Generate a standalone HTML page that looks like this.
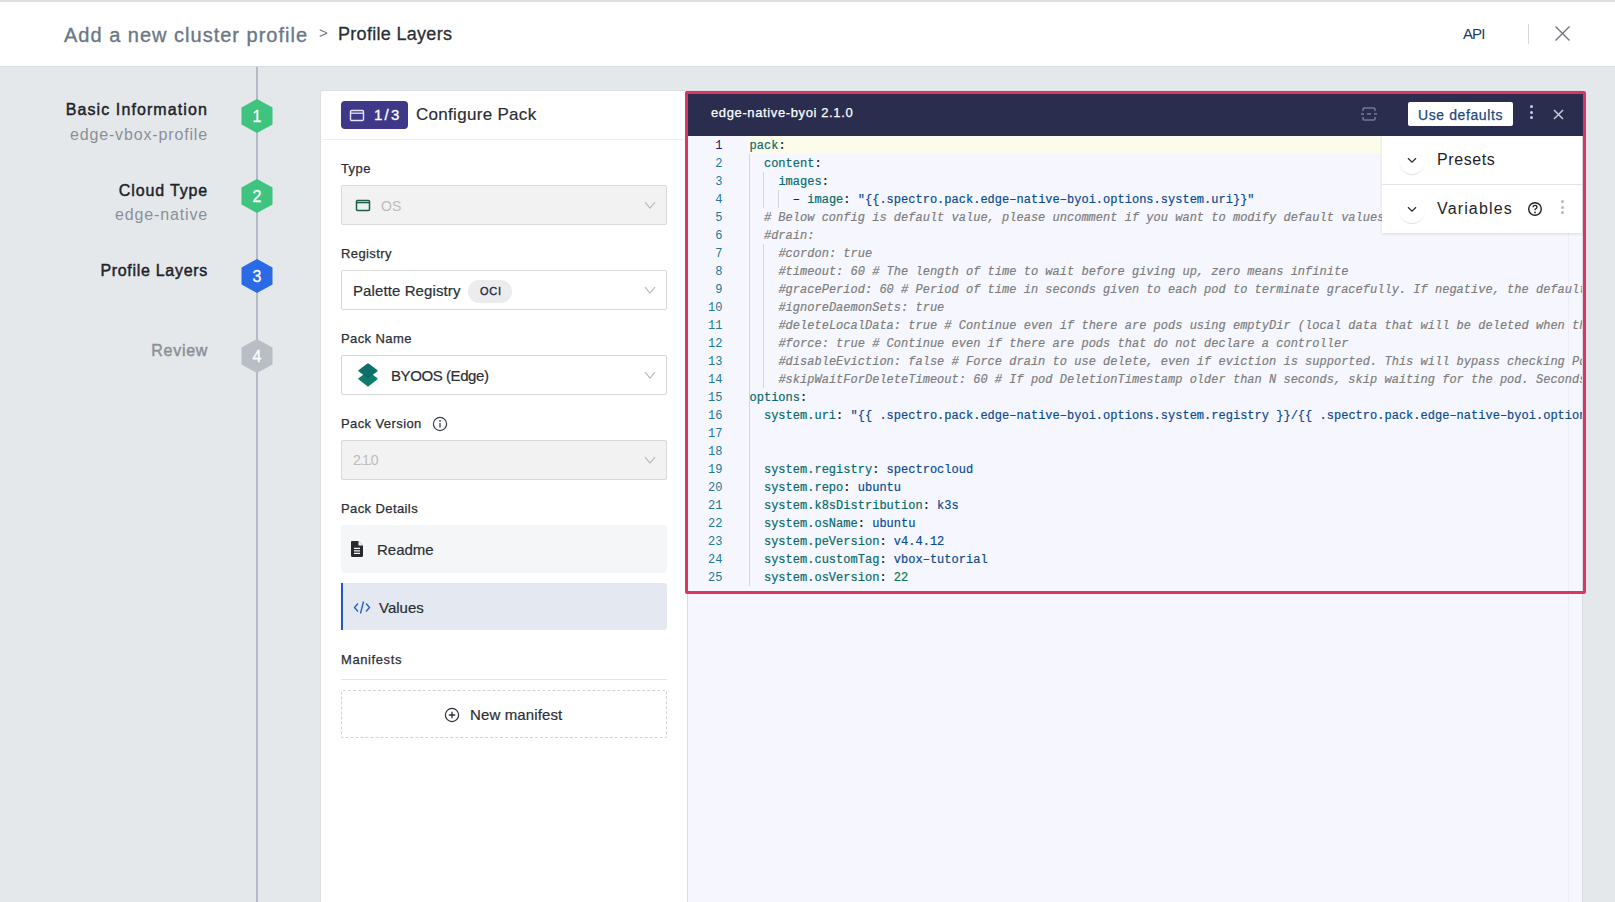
<!DOCTYPE html>
<html><head><meta charset="utf-8">
<style>
*{box-sizing:border-box;margin:0;padding:0}
html,body{width:1615px;height:902px;overflow:hidden}
body{background:#e4e8eb;font-family:"Liberation Sans",sans-serif;position:relative;color:#1f2329}
.abs{position:absolute}
.nw{white-space:nowrap}
#topline{left:0;top:0;width:1615px;height:2px;background:#dfe0e2}
#header{left:0;top:2px;width:1615px;height:65px;background:#fff;border-bottom:1px solid #d8dbe0}
.crumb{position:absolute;white-space:nowrap;line-height:1}
#timeline{left:256px;top:67px;width:2px;height:835px;background:#b6bac8}
.hex{position:absolute;width:32px;height:36px}
.hex span{position:absolute;left:0;top:0;width:32px;height:36px;line-height:36px;text-align:center;color:#fff;font-size:15px}
.step{position:absolute;right:1407px;text-align:right;white-space:nowrap;line-height:1}
.st{font-size:16px;font-weight:normal;color:#1f2329;-webkit-text-stroke:0.45px currentColor}
.ss{font-size:16px;color:#8b9096;letter-spacing:0.6px}
#card{left:320px;top:90px;width:1263px;height:830px;background:#fff;border:1px solid #dcdfe3;border-radius:3px}
.lbl{position:absolute;left:341px;font-size:13px;font-weight:normal;-webkit-text-stroke:0.25px currentColor;color:#2b2f35;letter-spacing:0.4px;line-height:1;white-space:nowrap}
.sel{position:absolute;left:341px;width:326px;height:40px;border:1px solid #d9d9d9;border-radius:2px;background:#fff}
.sel.dis{background:#f2f2f2}
.chev{position:absolute;right:10px;top:15px}
.hexn{width:32px;height:34px;line-height:35px;text-align:center;color:#fff;font-size:16px;-webkit-text-stroke:0.3px #fff}

#lnums{left:690px;top:137px;width:32.5px;font-family:"Liberation Mono",monospace;font-size:12px;line-height:18px;text-align:right;color:#237893}
#lnums .cur{color:#0b216f}
#code{left:749.5px;top:137px;width:832px;height:454px;overflow:hidden;font-family:"Liberation Mono",monospace;font-size:12px;line-height:18px;white-space:pre;letter-spacing:0.014px;-webkit-text-stroke:0.2px currentColor}
.cl{height:18px}
#code b{font-weight:normal}
.ky{color:#086a6b}
.pu{color:#1b1b1b}
.sv{color:#0b4a90}
.nv{color:#0e7b48}
.cm{color:#7d7d7d;font-style:italic}
</style></head><body>
<div id="topline" class="abs"></div>
<div id="header" class="abs">
  <div class="crumb" style="left:64px;top:23px;font-size:20px;color:#6b7785;letter-spacing:1.0px;-webkit-text-stroke:0.35px #6b7785">Add a new cluster profile</div>
  <div class="crumb" style="left:319px;top:23px;font-size:15px;color:#6b7785">&gt;</div>
  <div class="crumb" style="left:338px;top:23px;font-size:18px;color:#2a2f36;letter-spacing:0.3px;-webkit-text-stroke:0.3px #2a2f36">Profile Layers</div>
</div>
<div id="timeline" class="abs"></div>

<div class="abs nw" style="left:1463px;top:26px;font-size:15px;color:#1d3b63;line-height:1;letter-spacing:-0.9px">API</div>
<div class="abs" style="left:1528px;top:24px;width:1px;height:20px;background:#d5d8dc"></div>
<svg class="abs" style="left:1553px;top:24px" width="19" height="19" viewBox="0 0 19 19"><path d="M2.5 2.5L16.5 16.5M16.5 2.5L2.5 16.5" stroke="#6f7580" stroke-width="1.35" fill="none"/></svg>

<svg class="hex" style="left:241px;top:99px" width="32" height="36" viewBox="0 0 32 36"><polygon points="16,0 31.5,8.6 31.5,25.4 16,34 0.5,25.4 0.5,8.6" stroke-linejoin="round" stroke-width="0.8" fill="#3ec47e"/></svg>
<svg class="hex" style="left:241px;top:179px" width="32" height="36" viewBox="0 0 32 36"><polygon points="16,0 31.5,8.6 31.5,25.4 16,34 0.5,25.4 0.5,8.6" stroke-linejoin="round" stroke-width="0.8" fill="#3ec47e"/></svg>
<svg class="hex" style="left:241px;top:259px" width="32" height="36" viewBox="0 0 32 36"><polygon points="16,0 31.5,8.6 31.5,25.4 16,34 0.5,25.4 0.5,8.6" stroke-linejoin="round" stroke-width="0.8" fill="#2a6ae6"/></svg>
<svg class="hex" style="left:241px;top:339px" width="32" height="36" viewBox="0 0 32 36"><polygon points="16,0 31.5,8.6 31.5,25.4 16,34 0.5,25.4 0.5,8.6" stroke-linejoin="round" stroke-width="0.8" fill="#b9bdc4"/></svg>
<div class="abs hexn" style="left:241px;top:99px">1</div>
<div class="abs hexn" style="left:241px;top:179px">2</div>
<div class="abs hexn" style="left:241px;top:259px">3</div>
<div class="abs hexn" style="left:241px;top:339px">4</div>

<div class="step st" style="top:102px;letter-spacing:1.1px">Basic Information</div>
<div class="step ss" style="top:127px;letter-spacing:0.85px">edge-vbox-profile</div>
<div class="step st" style="top:183px;letter-spacing:0.85px">Cloud Type</div>
<div class="step ss" style="top:207px;letter-spacing:0.85px">edge-native</div>
<div class="step st" style="top:263px;letter-spacing:0.7px">Profile Layers</div>
<div class="step st" style="top:343px;color:#8b9096;letter-spacing:0.7px">Review</div>

<div id="card" class="abs"></div>
<div class="abs" style="left:322px;top:139px;width:365px;height:1px;background:#eceef1"></div>
<div class="abs" style="left:341px;top:101px;width:67px;height:28px;background:#3f3889;border-radius:4px"></div>
<svg class="abs" style="left:349px;top:109px" width="16" height="13" viewBox="0 0 16 13"><rect x="1.5" y="1.5" width="13" height="10" rx="1.2" fill="none" stroke="#e6e4f5" stroke-width="1.4"/><path d="M1.5 4.2H14.5" stroke="#e6e4f5" stroke-width="1.3"/></svg>
<div class="abs nw" style="left:374px;top:107px;font-size:15px;font-weight:normal;-webkit-text-stroke:0.35px #fff;color:#fff;line-height:1;letter-spacing:2.2px">1/3</div>
<div class="abs nw" style="left:416px;top:106px;font-size:17px;color:#2b2f35;-webkit-text-stroke:0.2px #2b2f35;line-height:1;letter-spacing:0.3px">Configure Pack</div>

<div class="lbl" style="top:162px">Type</div>
<div class="sel dis" style="top:185px"><svg class="chev" width="12" height="9" viewBox="0 0 12 9"><path d="M1 1.2L6 7.2L11 1.2" stroke="#b8b8b8" stroke-width="1.1" fill="none"/></svg></div>
<svg class="abs" style="left:355px;top:199px" width="16" height="13" viewBox="0 0 16 13"><rect x="1.5" y="1.5" width="13" height="10" rx="1" fill="#e8f3ee" stroke="#1e5b4a" stroke-width="1.5"/><path d="M1.5 3.6H14.5" stroke="#1e5b4a" stroke-width="1.4"/></svg>
<div class="abs nw" style="left:381px;top:199px;font-size:14px;color:#bcbcbc;line-height:1">OS</div>

<div class="lbl" style="top:247px">Registry</div>
<div class="sel" style="top:270px"><svg class="chev" width="12" height="9" viewBox="0 0 12 9"><path d="M1 1.2L6 7.2L11 1.2" stroke="#b8b8b8" stroke-width="1.1" fill="none"/></svg></div>
<div class="abs nw" style="left:353px;top:283px;font-size:15px;color:#2b2f35;-webkit-text-stroke:0.2px #2b2f35;line-height:1;letter-spacing:0.1px">Palette Registry</div>
<div class="abs" style="left:468px;top:280px;width:44px;height:23px;background:#ececee;border-radius:12px"></div>
<div class="abs nw" style="left:480px;top:286px;font-size:11px;font-weight:normal;-webkit-text-stroke:0.35px #222a45;color:#222a45;line-height:1;letter-spacing:0.7px">OCI</div>

<div class="lbl" style="top:332px">Pack Name</div>
<div class="sel" style="top:355px"><svg class="chev" width="12" height="9" viewBox="0 0 12 9"><path d="M1 1.2L6 7.2L11 1.2" stroke="#b8b8b8" stroke-width="1.1" fill="none"/></svg></div>
<svg class="abs" style="left:357px;top:362px" width="22" height="26" viewBox="0 0 22 26"><path d="M11 10.5L19.6 16.7L11 23.4L2.4 16.7Z" fill="#0f7a6c" stroke="#0f7a6c" stroke-width="2" stroke-linejoin="round"/><path d="M11 2.4L19.6 8.7L11 15.3L2.4 8.7Z" fill="#0e6e69" stroke="#0e6e69" stroke-width="2" stroke-linejoin="round"/><path d="M6 11.3L11 15.3L16 11.3L11 14.2Z" fill="#0a5a55"/></svg>
<div class="abs nw" style="left:391px;top:368px;font-size:15px;color:#2b2f35;-webkit-text-stroke:0.2px #2b2f35;line-height:1;letter-spacing:-0.42px">BYOOS (Edge)</div>

<div class="lbl" style="top:417px">Pack Version</div>
<svg class="abs" style="left:432px;top:416px" width="16" height="16" viewBox="0 0 16 16"><circle cx="8" cy="8" r="6.6" fill="none" stroke="#3a3f46" stroke-width="1.2"/><circle cx="8" cy="4.9" r="0.9" fill="#3a3f46"/><path d="M8 7V11.5" stroke="#3a3f46" stroke-width="1.3"/></svg>
<div class="sel dis" style="top:440px"><svg class="chev" width="12" height="9" viewBox="0 0 12 9"><path d="M1 1.2L6 7.2L11 1.2" stroke="#b8b8b8" stroke-width="1.1" fill="none"/></svg></div>
<div class="abs nw" style="left:353px;top:453px;font-size:14px;color:#bcbcbc;line-height:1;letter-spacing:-1.4px">2.1.0</div>

<div class="lbl" style="top:502px">Pack Details</div>
<div class="abs" style="left:341px;top:525px;width:326px;height:48px;background:#f5f6f7;border-radius:3px"></div>
<svg class="abs" style="left:350px;top:540px" width="14" height="18" viewBox="0 0 14 18"><path d="M1 2.2C1 1.5 1.5 1 2.2 1H8.5L13 5.5V15.8C13 16.5 12.5 17 11.8 17H2.2C1.5 17 1 16.5 1 15.8Z" fill="#26292e"/><path d="M8.5 1V5.5H13" fill="#f5f6f8"/><path d="M4 8.4H10M4 10.9H10M4 13.4H10" stroke="#f5f6f8" stroke-width="1.1"/></svg>
<div class="abs nw" style="left:377px;top:542px;font-size:15px;color:#2b2f35;-webkit-text-stroke:0.2px #2b2f35;line-height:1">Readme</div>
<div class="abs" style="left:341px;top:583px;width:326px;height:47px;background:#e4e9f1;border-radius:0 3px 3px 0;border-left:2px solid #2559b8"></div>
<svg class="abs" style="left:353px;top:600px" width="18" height="15" viewBox="0 0 18 15"><path d="M5 3.5L1.5 7.5L5 11.5M13 3.5L16.5 7.5L13 11.5M10.5 1.5L7.5 13.5" stroke="#2a61c4" stroke-width="1.4" fill="none"/></svg>
<div class="abs nw" style="left:379px;top:600px;font-size:15px;color:#2b2f35;-webkit-text-stroke:0.2px #2b2f35;line-height:1">Values</div>

<div class="lbl" style="top:653px;letter-spacing:0.6px">Manifests</div>
<div class="abs" style="left:341px;top:679px;width:326px;height:1px;background:#e3e4e6"></div>
<div class="abs" style="left:341px;top:690px;width:326px;height:48px;border:1px dashed #d3d3d3;border-radius:2px"></div>
<svg class="abs" style="left:444px;top:707px" width="16" height="16" viewBox="0 0 16 16"><circle cx="8" cy="8" r="6.6" fill="none" stroke="#2b2f35" stroke-width="1.2"/><path d="M8 4.8V11.2M4.8 8H11.2" stroke="#2b2f35" stroke-width="1.3"/></svg>
<div class="abs nw" style="left:470px;top:707px;font-size:15px;color:#2b2f35;-webkit-text-stroke:0.2px #2b2f35;line-height:1;letter-spacing:0.12px">New manifest</div>

<div class="abs" style="left:687px;top:91px;width:896px;height:811px;background:#f6f7fe;border-left:1px solid #d9dbe3;border-right:1px solid #d9dbe3"></div>
<div class="abs" style="left:1568px;top:136px;width:1px;height:766px;background:#eceef5"></div>
<div class="abs" style="left:749px;top:136px;width:820px;height:18px;background:#fdfbe9"></div>
<div class="abs" style="left:749px;top:154px;width:1px;height:432px;background:#d5d7de"></div>
<div class="abs" style="left:763px;top:172px;width:1px;height:36px;background:#d5d7de"></div>
<div class="abs" style="left:778px;top:190px;width:1px;height:18px;background:#d5d7de"></div>
<div class="abs" style="left:763px;top:244px;width:1px;height:144px;background:#d5d7de"></div>
<div class="abs" style="left:749px;top:406px;width:1px;height:180px;background:#d5d7de"></div>
<div id="lnums" class="abs"><div class="ln cur">1</div><div class="ln">2</div><div class="ln">3</div><div class="ln">4</div><div class="ln">5</div><div class="ln">6</div><div class="ln">7</div><div class="ln">8</div><div class="ln">9</div><div class="ln">10</div><div class="ln">11</div><div class="ln">12</div><div class="ln">13</div><div class="ln">14</div><div class="ln">15</div><div class="ln">16</div><div class="ln">17</div><div class="ln">18</div><div class="ln">19</div><div class="ln">20</div><div class="ln">21</div><div class="ln">22</div><div class="ln">23</div><div class="ln">24</div><div class="ln">25</div></div>
<div id="code" class="abs"><div class="cl"><b class="ky">pack</b><b class="pu">:</b></div><div class="cl">  <b class="ky">content</b><b class="pu">:</b></div><div class="cl">    <b class="ky">images</b><b class="pu">:</b></div><div class="cl">      <b class="pu">–</b> <b class="ky">image</b><b class="pu">:</b> <b class="sv">&quot;{{.spectro.pack.edge–native–byoi.options.system.uri}}&quot;</b></div><div class="cl">  <i class="cm"># Below config is default value, please uncomment if you want to modify default values</i></div><div class="cl">  <i class="cm">#drain:</i></div><div class="cl">    <i class="cm">#cordon: true</i></div><div class="cl">    <i class="cm">#timeout: 60 # The length of time to wait before giving up, zero means infinite</i></div><div class="cl">    <i class="cm">#gracePeriod: 60 # Period of time in seconds given to each pod to terminate gracefully. If negative, the default value specified in the pod will be used</i></div><div class="cl">    <i class="cm">#ignoreDaemonSets: true</i></div><div class="cl">    <i class="cm">#deleteLocalData: true # Continue even if there are pods using emptyDir (local data that will be deleted when the node is drained)</i></div><div class="cl">    <i class="cm">#force: true # Continue even if there are pods that do not declare a controller</i></div><div class="cl">    <i class="cm">#disableEviction: false # Force drain to use delete, even if eviction is supported. This will bypass checking PodDisruptionBudgets, use with caution.</i></div><div class="cl">    <i class="cm">#skipWaitForDeleteTimeout: 60 # If pod DeletionTimestamp older than N seconds, skip waiting for the pod. Seconds must be greater than 0 to skip.</i></div><div class="cl"><b class="ky">options</b><b class="pu">:</b></div><div class="cl">  <b class="ky">system.uri</b><b class="pu">:</b> <b class="sv">&quot;{{ .spectro.pack.edge–native–byoi.options.system.registry }}/{{ .spectro.pack.edge–native–byoi.options.system.repo }}:{{ .spectro.pack.edge–native–byoi.options.system.k8sDistribution }}&quot;</b></div><div class="cl"></div><div class="cl"></div><div class="cl">  <b class="ky">system.registry</b><b class="pu">:</b> <b class="sv">spectrocloud</b></div><div class="cl">  <b class="ky">system.repo</b><b class="pu">:</b> <b class="sv">ubuntu</b></div><div class="cl">  <b class="ky">system.k8sDistribution</b><b class="pu">:</b> <b class="sv">k3s</b></div><div class="cl">  <b class="ky">system.osName</b><b class="pu">:</b> <b class="sv">ubuntu</b></div><div class="cl">  <b class="ky">system.peVersion</b><b class="pu">:</b> <b class="sv">v4.4.12</b></div><div class="cl">  <b class="ky">system.customTag</b><b class="pu">:</b> <b class="sv">vbox–tutorial</b></div><div class="cl">  <b class="ky">system.osVersion</b><b class="pu">:</b> <b class="nv">22</b></div></div>
<div class="abs" style="left:686px;top:91px;width:897px;height:45px;background:#2b2d4f"></div>
<div class="abs nw" style="left:711px;top:106px;font-size:13px;color:#fff;line-height:1;letter-spacing:0.62px;-webkit-text-stroke:0.25px #fff">edge-native-byoi 2.1.0</div>
<svg class="abs" style="left:1360px;top:106px" width="18" height="16" viewBox="0 0 18 16"><path d="M3 5V3.2C3 2.5 3.5 2 4.2 2H13.8C14.5 2 15 2.5 15 3.2V5M3 11V12.8C3 13.5 3.5 14 4.2 14H13.8C14.5 14 15 13.5 15 12.8V11M1 8H4M7 8H11M14 8H17" stroke="#737a9c" stroke-width="1.5" fill="none"/></svg>
<div class="abs" style="left:1408px;top:102px;width:105px;height:24px;background:#fff;border-radius:2px"></div>
<div class="abs nw" style="left:1418px;top:108px;font-size:14px;color:#224878;line-height:1;letter-spacing:0.6px;-webkit-text-stroke:0.25px #224878">Use defaults</div>
<div class="abs" style="left:1529.5px;top:105px;width:3px;height:3px;border-radius:50%;background:#c9cadb"></div>
<div class="abs" style="left:1529.5px;top:110.5px;width:3px;height:3px;border-radius:50%;background:#c9cadb"></div>
<div class="abs" style="left:1529.5px;top:116px;width:3px;height:3px;border-radius:50%;background:#c9cadb"></div>
<svg class="abs" style="left:1553px;top:109px" width="11" height="11" viewBox="0 0 11 11"><path d="M1 1L10 10M10 1L1 10" stroke="#c9cadb" stroke-width="1.5" fill="none"/></svg>

<div class="abs" style="left:1382px;top:136px;width:200px;height:97px;background:#fff;box-shadow:0 1px 3px rgba(0,0,0,0.12)"></div>
<div class="abs" style="left:1382px;top:184px;width:200px;height:1px;background:#e3e3e6"></div>
<div class="abs" style="left:1399px;top:148px;width:26px;height:26px;border-radius:50%;box-shadow:0 1.5px 1px -0.5px rgba(0,0,0,0.13)"></div>
<svg class="abs" style="left:1407px;top:157px" width="10" height="7" viewBox="0 0 10 7"><path d="M1 1.2L5 5.2L9 1.2" stroke="#2b2f35" stroke-width="1.3" fill="none"/></svg>
<div class="abs nw" style="left:1437px;top:152px;font-size:16px;color:#1f2329;line-height:1;letter-spacing:0.6px">Presets</div>
<div class="abs" style="left:1399px;top:197px;width:26px;height:26px;border-radius:50%;box-shadow:0 1.5px 1px -0.5px rgba(0,0,0,0.13)"></div>
<svg class="abs" style="left:1407px;top:206px" width="10" height="7" viewBox="0 0 10 7"><path d="M1 1.2L5 5.2L9 1.2" stroke="#2b2f35" stroke-width="1.3" fill="none"/></svg>
<div class="abs nw" style="left:1437px;top:201px;font-size:16px;color:#1f2329;line-height:1;letter-spacing:1.15px">Variables</div>
<svg class="abs" style="left:1527px;top:201px" width="16" height="16" viewBox="0 0 16 16"><circle cx="8" cy="8" r="6.3" fill="none" stroke="#1f2329" stroke-width="1.4"/><path d="M6 6.3C6 5.1 6.9 4.4 8 4.4C9.1 4.4 10 5.1 10 6.2C10 7.5 8 7.6 8 9.2" stroke="#1f2329" stroke-width="1.3" fill="none"/><circle cx="8" cy="11.4" r="0.85" fill="#1f2329"/></svg>
<div class="abs" style="left:1560.5px;top:200px;width:3px;height:3px;border-radius:50%;background:#b9b9bd"></div>
<div class="abs" style="left:1560.5px;top:205.5px;width:3px;height:3px;border-radius:50%;background:#b9b9bd"></div>
<div class="abs" style="left:1560.5px;top:211px;width:3px;height:3px;border-radius:50%;background:#b9b9bd"></div>

<div class="abs" style="left:685px;top:91px;width:901px;height:503px;border:3px solid #e0335f;border-radius:2px"></div>
</body></html>
